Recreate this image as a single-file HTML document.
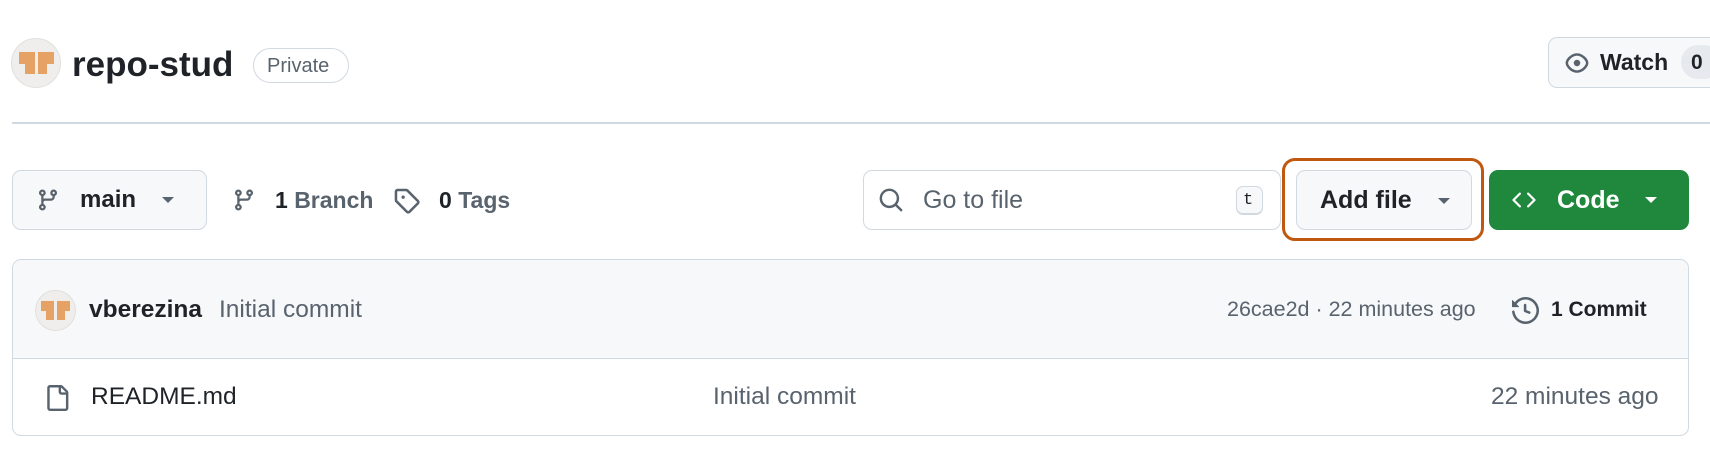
<!DOCTYPE html>
<html><head><meta charset="utf-8"><style>
*{box-sizing:border-box;margin:0;padding:0}
body{width:1710px;height:450px;background:#fff;position:relative;overflow:hidden;font-family:"Liberation Sans",sans-serif;color:#1f2328}
.a{position:absolute}
.btn{position:absolute;border:1.5px solid #d1d9e0;border-radius:9px;background:#f6f8fa}
.t{position:absolute;white-space:nowrap;line-height:1}
.m{color:#59636e}
svg{position:absolute}
</style></head><body>
<div class="a" style="left:11px;top:38px;width:50px;height:50px;border-radius:50%;background:#f0eeec;border:1.5px solid #e2dfdc;overflow:hidden">
<div class="a" style="left:7px;top:13px;width:16px;height:12px;background:#e6a264"></div>
<div class="a" style="left:13px;top:25px;width:10px;height:10px;background:#e6a264"></div>
<div class="a" style="left:26px;top:13px;width:16px;height:12px;background:#e6a264"></div>
<div class="a" style="left:26px;top:25px;width:9px;height:10px;background:#e6a264"></div>
</div>
<div class="t" style="left:72px;top:47px;font-size:35px;font-weight:bold">repo-stud</div>
<div class="a" style="left:253px;top:48px;width:96px;height:35px;border:1.5px solid #d1d9e0;border-radius:18px"></div>
<div class="t m" style="left:267px;top:56px;font-size:20px">Private</div>
<div class="btn" style="left:1548px;top:37px;width:200px;height:51px"></div>
<svg style="left:1563px;top:50px" width="28" height="26" viewBox="0 0 16 16"><path fill="#59636e" d="M8 2c1.980 0 3.72 1.03 4.95 2.19C14.1 5.27 15 6.6 15 8s-.9 2.730-2.05 3.81C11.72 12.97 9.98 14 8 14s-3.72-1.03-4.95-2.19C1.9 10.73 1 9.4 1 8s.9-2.73 2.05-3.81C4.28 3.03 6.02 2 8 2Zm0 1.5c-1.550 0-2.94.81-3.92 1.78C3.16 6.17 2.5 7.2 2.5 8s.66 1.83 1.58 2.72c.98.97 2.37 1.78 3.92 1.78s2.94-.81 3.920-1.78C12.84 9.83 13.5 8.8 13.5 8s-.66-1.83-1.58-2.72C10.94 4.31 9.55 3.5 8 3.5ZM8 6a2 2 0 1 1 0 4 2 2 0 0 1 0-4Z"/></svg>
<div class="t" style="left:1600px;top:51px;font-size:23px;font-weight:bold">Watch</div>
<div class="a" style="left:1681px;top:45px;width:40px;height:34px;border-radius:17px;background:#e6eaef"></div>
<div class="t" style="left:1691px;top:52px;font-size:21px;font-weight:bold">0</div>
<div class="a" style="left:12px;top:122px;width:1698px;height:2px;background:#d1d9e0"></div>
<div class="btn" style="left:12px;top:170px;width:195px;height:60px"></div>
<svg style="left:36px;top:188px" width="24" height="24" viewBox="0 0 16 16"><path fill="#59636e" d="M9.5 3.25a2.25 2.25 0 1 1 3 2.122V6A2.5 2.5 0 0 1 10 8.5H6a1 1 0 0 0-1 1v1.128a2.251 2.251 0 1 1-1.5 0V5.372a2.25 2.25 0 1 1 1.5 0v1.836A2.493 2.493 0 0 1 6 7h4a1 1 0 0 0 1-1v-.628A2.25 2.25 0 0 1 9.5 3.25Zm-6 0a.75.75 0 1 0 1.5 0 .75.75 0 0 0-1.5 0Zm8.25-.75a.75.75 0 1 0 0 1.5.75.75 0 0 0 0-1.5ZM4.25 12a.75.75 0 1 0 0 1.5.75.75 0 0 0 0-1.5Z"/></svg>
<div class="t" style="left:80px;top:188px;font-size:24px;font-weight:bold">main</div>
<svg style="left:160px;top:195px" width="16" height="10"><path d="M2 2h12l-6 6z" fill="#59636e"/></svg>
<svg style="left:232px;top:188px" width="24" height="24" viewBox="0 0 16 16"><path fill="#59636e" d="M9.5 3.25a2.25 2.25 0 1 1 3 2.122V6A2.5 2.5 0 0 1 10 8.5H6a1 1 0 0 0-1 1v1.128a2.251 2.251 0 1 1-1.5 0V5.372a2.25 2.25 0 1 1 1.5 0v1.836A2.493 2.493 0 0 1 6 7h4a1 1 0 0 0 1-1v-.628A2.25 2.25 0 0 1 9.5 3.25Zm-6 0a.75.75 0 1 0 1.5 0 .75.75 0 0 0-1.5 0Zm8.25-.75a.75.75 0 1 0 0 1.5.75.75 0 0 0 0-1.5ZM4.25 12a.75.75 0 1 0 0 1.5.75.75 0 0 0 0-1.5Z"/></svg>
<div class="t" style="left:275px;top:189px;font-size:23px"><b>1</b> <span class="m" style="font-weight:bold">Branch</span></div>
<svg style="left:393px;top:187px" width="27" height="27" viewBox="0 0 16 16"><path fill="#59636e" d="M1 7.775V2.75C1 1.784 1.784 1 2.75 1h5.025c.464 0 .91.184 1.238.513l6.25 6.25a1.75 1.75 0 0 1 0 2.474l-5.026 5.026a1.75 1.75 0 0 1-2.474 0l-6.250-6.25A1.752 1.752 0 0 1 1 7.775Zm1.5 0c0 .066.026.13.073.177l6.25 6.25a.25.25 0 0 0 .354 0l5.025-5.025a.25.25 0 0 0 0-.354l-6.25-6.25a.25.25 0 0 0-.177-.073H2.75a.25.25 0 0 0-.25.25ZM6 5a1 1 0 1 1 0 2 1 1 0 0 1 0-2Z"/></svg>
<div class="t" style="left:439px;top:189px;font-size:23px"><b>0</b> <span class="m" style="font-weight:bold">Tags</span></div>
<div class="a" style="left:863px;top:170px;width:418px;height:60px;border:1.5px solid #d1d9e0;border-radius:9px;background:#fff"></div>
<svg style="left:878px;top:187px" width="26" height="26" viewBox="0 0 16 16"><path fill="#59636e" d="M10.68 11.74a6 6 0 0 1-7.922-8.982 6 6 0 0 1 8.982 7.922l3.04 3.04a.749.749 0 1 1-1.06 1.06l-3.04-3.04ZM11.5 7a4.499 4.499 0 1 0-8.997 0A4.499 4.499 0 0 0 11.5 7Z"/></svg>
<div class="t m" style="left:923px;top:188px;font-size:25px">Go to file</div>
<div class="a" style="left:1236px;top:186px;width:27px;height:29px;border:1.5px solid #d1d9e0;border-radius:7px;background:#f6f8fa;box-shadow:inset 0 -1px 0 #d1d9e0"></div>
<div class="t" style="left:1243px;top:192px;font-size:17px;font-family:'Liberation Mono',monospace">t</div>
<div class="a" style="left:1282px;top:158px;width:202px;height:83px;border:3.5px solid #c0580f;border-radius:13px"></div>
<div class="btn" style="left:1296px;top:170px;width:176px;height:60px"></div>
<div class="t" style="left:1320px;top:188px;font-size:25px;font-weight:bold">Add file</div>
<svg style="left:1436px;top:196px" width="16" height="10"><path d="M2 2h12l-6 6z" fill="#59636e"/></svg>
<div class="a" style="left:1489px;top:170px;width:200px;height:60px;border-radius:9px;background:#1f883d"></div>
<svg style="left:1511px;top:188px" width="26" height="24" viewBox="0 0 16 16"><path fill="#fff" d="m11.28 3.22 4.25 4.25a.75.75 0 0 1 0 1.06l-4.25 4.25a.749.749 0 0 1-1.275-.326.749.749 0 0 1 .215-.734L13.94 8l-3.72-3.72a.749.749 0 0 1 .326-1.275.749.749 0 0 1 .734.215Zm-6.56 0a.751.751 0 0 1 1.042.018.751.751 0 0 1 .018 1.042L2.06 8l3.72 3.72a.749.749 0 0 1-.326 1.275.749.749 0 0 1-.734-.215L.47 8.53a.75.75 0 0 1 0-1.06Z"/></svg>
<div class="t" style="left:1557px;top:188px;font-size:25px;font-weight:bold;color:#fff">Code</div>
<svg style="left:1643px;top:195px" width="16" height="10"><path d="M2 2h12l-6 6z" fill="#fff"/></svg>
<div class="a" style="left:12px;top:259px;width:1677px;height:177px;border:1.5px solid #d1d9e0;border-radius:9px;overflow:hidden">
<div class="a" style="left:0;top:0;width:100%;height:99px;background:#f6f8fa;border-bottom:1.5px solid #d1d9e0"></div>
</div>
<div class="a" style="left:35px;top:290px;width:41px;height:41px;border-radius:50%;background:#f0eeec;border:1.5px solid #e2dfdc;overflow:hidden">
<div class="a" style="left:5px;top:10px;width:13px;height:10px;background:#e6a264"></div>
<div class="a" style="left:10px;top:20px;width:8px;height:9px;background:#e6a264"></div>
<div class="a" style="left:21px;top:10px;width:13px;height:10px;background:#e6a264"></div>
<div class="a" style="left:21px;top:20px;width:8px;height:9px;background:#e6a264"></div>
</div>
<div class="t" style="left:89px;top:298px;font-size:24.5px;font-weight:bold">vberezina</div>
<div class="t m" style="left:219px;top:298px;font-size:24.5px">Initial commit</div>
<div class="t m" style="left:1227px;top:299px;font-size:21.5px">26cae2d · 22 minutes ago</div>
<svg style="left:1512px;top:297px" width="27" height="27" viewBox="0 0 16 16"><path fill="#59636e" d="m.427 1.927 1.215 1.215a8.002 8.002 0 1 1-1.6 5.685.75.75 0 1 1 1.493-.154 6.5 6.5 0 1 0 1.18-4.458l1.358 1.358A.25.25 0 0 1 3.896 6H.25A.25.25 0 0 1 0 5.75V2.104a.25.25 0 0 1 .427-.177ZM7.75 4a.75.75 0 0 1 .75.75v2.992l2.028.812a.75.75 0 0 1-.557 1.392l-2.5-1A.751.751 0 0 1 7 8.25v-3.5A.75.75 0 0 1 7.75 4Z"/></svg>
<div class="t" style="left:1551px;top:299px;font-size:21px;font-weight:bold">1 Commit</div>
<svg style="left:44px;top:384px" width="26" height="28" viewBox="0 0 16 16"><path fill="#59636e" d="M2 1.75C2 .784 2.784 0 3.75 0h6.586c.464 0 .909.184 1.237.513l2.914 2.914c.329.328.513.773.513 1.237v9.586A1.75 1.75 0 0 1 13.25 16h-9.5A1.75 1.75 0 0 1 2 14.25Zm1.75-.25a.25.25 0 0 0-.25.25v12.5c0 .138.112.25.25.25h9.5a.25.25 0 0 0 .25-.25V6h-2.75A1.75 1.75 0 0 1 9 4.25V1.5Zm6.75.062V4.25c0 .138.112.25.25.25h2.688l-.011-.013-2.914-2.914-.013-.011Z"/></svg>
<div class="t" style="left:91px;top:385px;font-size:24.5px">README.md</div>
<div class="t m" style="left:713px;top:385px;font-size:24.5px">Initial commit</div>
<div class="t m" style="left:1491px;top:385px;font-size:24.5px">22 minutes ago</div>
</body></html>
